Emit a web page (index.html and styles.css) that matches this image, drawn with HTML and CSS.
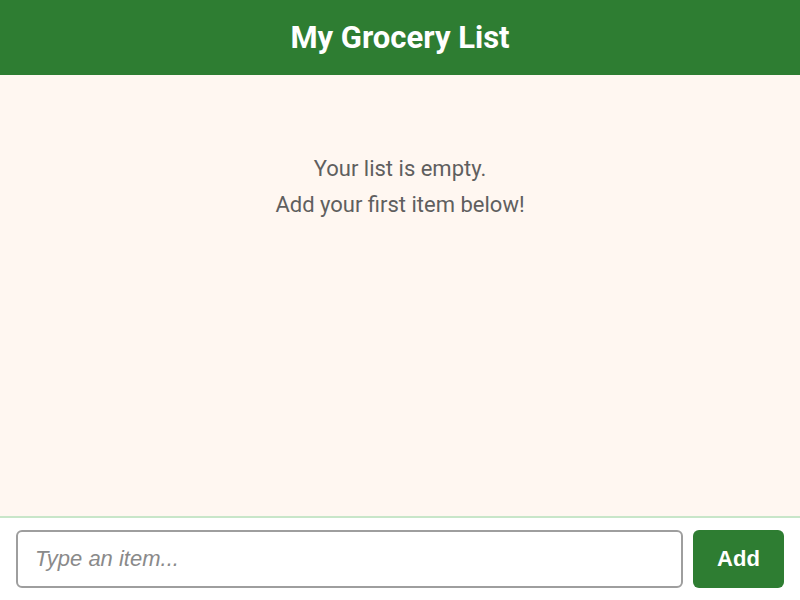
FILE: index.html
```html
<!DOCTYPE html>
<html lang="en">
<head>
<meta charset="utf-8">
<title>My Grocery List</title>
<link rel="stylesheet" href="styles.css">
</head>
<body>
<div class="app">
  <header class="header">
    <h1 class="title">My Grocery List</h1>
  </header>
  <main class="list">
    <p class="empty">Your list is empty.<br>Add your first item below!</p>
  </main>
  <footer class="composer">
    <input class="item-input" type="text" placeholder="Type an item...">
    <button class="add-btn" type="button">Add</button>
  </footer>
</div>
</body>
</html>
```

FILE: styles.css
```css
* { box-sizing: border-box; }
html, body { margin: 0; padding: 0; height: 100%; }
body { font-family: Roboto, "Liberation Sans", sans-serif; background: #fff7f1; }
.app { display: flex; flex-direction: column; height: 100vh; }
.header {
  height: 75px;
  background: #2e7d32;
  display: flex;
  align-items: center;
  justify-content: center;
  flex: none;
}
.title {
  margin: 0;
  color: #fff;
  font-family: Roboto, sans-serif;
  font-weight: 700;
  font-size: 31px;
}
.list { flex: 1; padding: 76px 16px 16px; }
.empty {
  margin: 0;
  text-align: center;
  color: #5f5f5f;
  font-size: 22px;
  line-height: 36px;
}
.composer {
  flex: none;
  background: #fff;
  border-top: 2px solid #c8e6c9;
  padding: 12px 16px 12px;
  display: flex;
  gap: 10px;
  height: 84px;
}
.item-input {
  flex: 1;
  min-width: 0;
  height: 58px;
  border: 2px solid #9e9e9e;
  border-radius: 6px;
  padding: 0 17px;
  font-family: "Liberation Sans", Arial, sans-serif;
  font-size: 22px;
  color: #333;
  background: #fff;
  outline: none;
}
.item-input::placeholder { color: #8a8a8a; font-style: italic; }
.add-btn {
  width: 91px;
  height: 58px;
  border: none;
  border-radius: 6px;
  background: #2e7d32;
  color: #fff;
  font-family: "Liberation Sans", Arial, sans-serif;
  font-weight: 700;
  font-size: 22px;
  cursor: pointer;
}
```
